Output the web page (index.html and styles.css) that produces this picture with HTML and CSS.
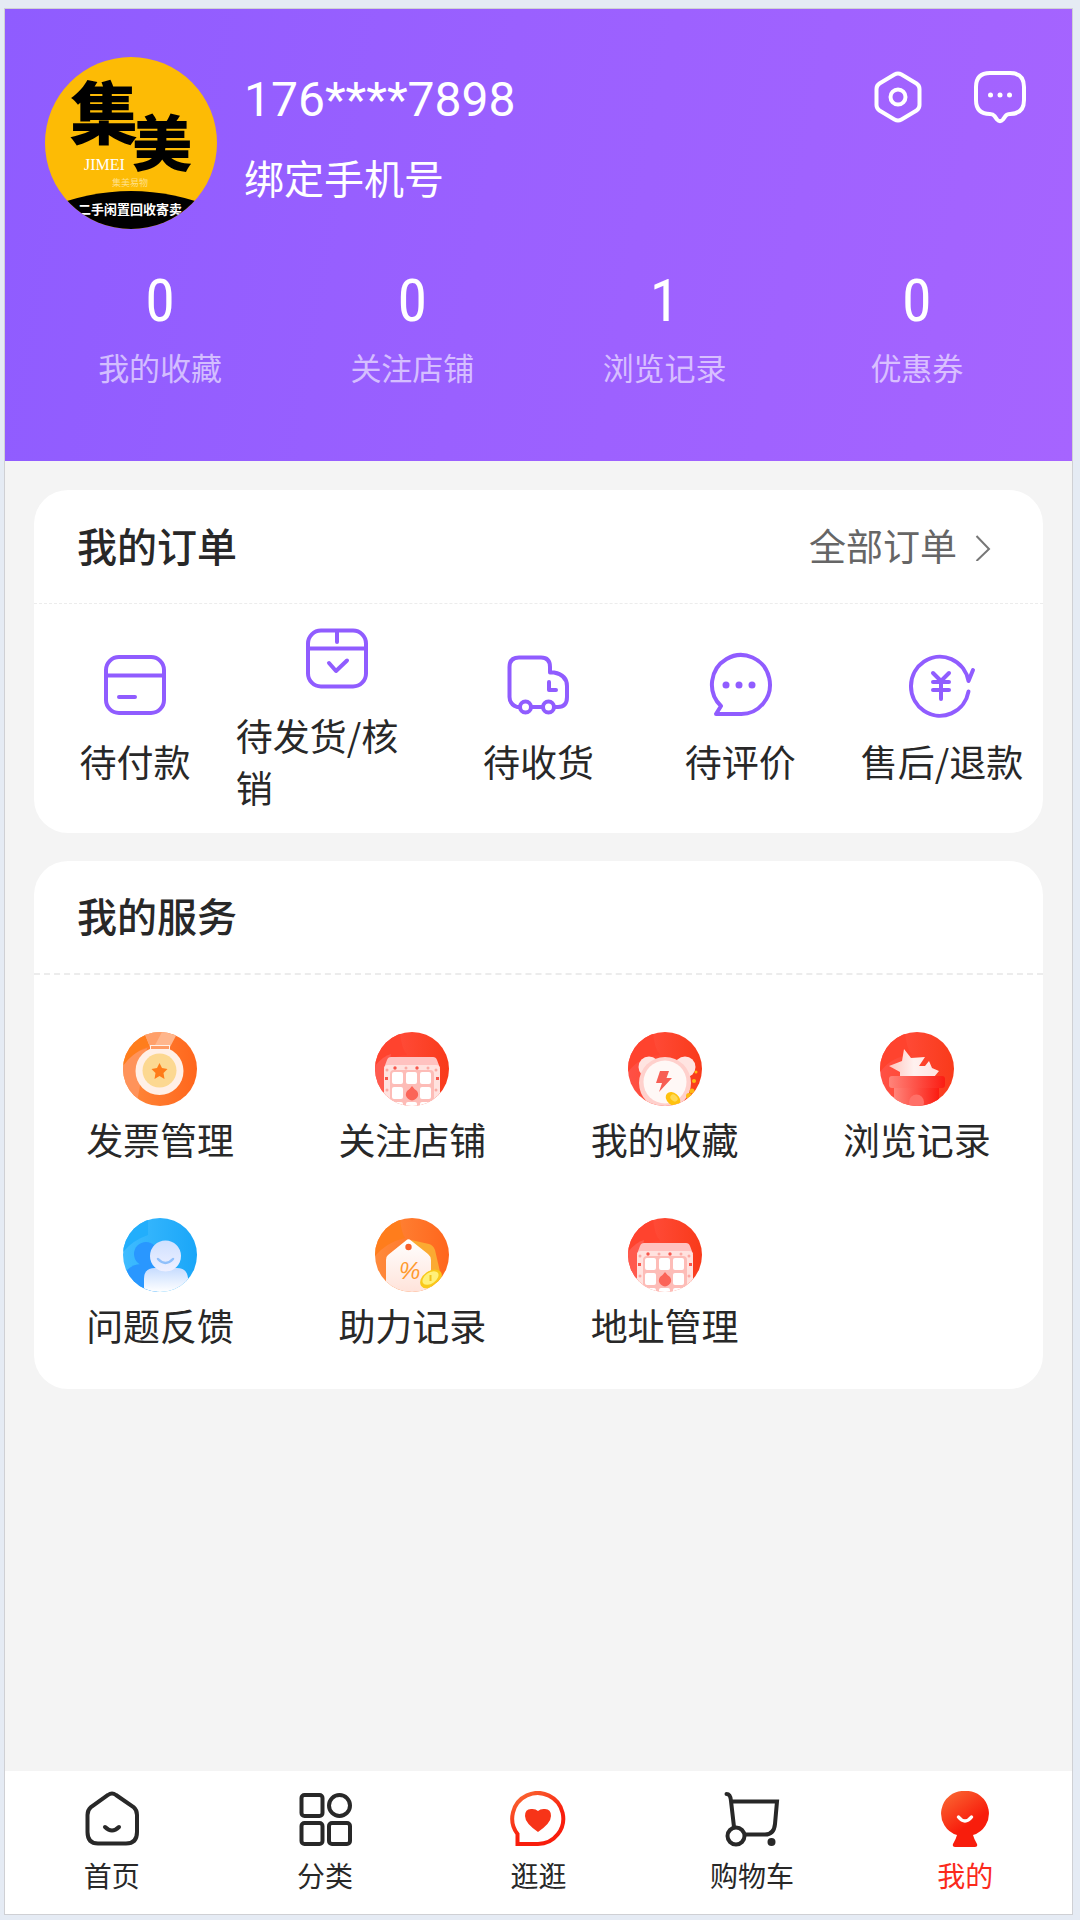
FILE: index.html
```html
<!DOCTYPE html>
<html lang="zh-CN">
<head>
    <meta charset="UTF-8">
    <meta name="viewport" content="width=device-width, initial-scale=1.0">
    <title>我的</title>
    <link rel="stylesheet" href="styles.css">
</head>
<body>
    <!-- shared gradients and icons -->
    <svg class="defs" aria-hidden="true">
        <defs>
            <linearGradient id="g-red" x1="0" y1="0" x2="1" y2="0">
                <stop offset="0" stop-color="#ff5046"/>
                <stop offset="0.35" stop-color="#ff4a36"/>
                <stop offset="1" stop-color="#f93a1a"/>
            </linearGradient>
            <linearGradient id="g-orange" x1="0" y1="0" x2="1" y2="0">
                <stop offset="0" stop-color="#ff8a3c"/>
                <stop offset="1" stop-color="#ff661c"/>
            </linearGradient>
            <linearGradient id="g-blue" x1="0" y1="0" x2="1" y2="0">
                <stop offset="0" stop-color="#3fbcff"/>
                <stop offset="1" stop-color="#1aa6f8"/>
            </linearGradient>
            <linearGradient id="g-pot" x1="0" y1="0" x2="1" y2="0">
                <stop offset="0" stop-color="#ff847a"/>
                <stop offset="1" stop-color="#fb1c12"/>
            </linearGradient>
            <linearGradient id="g-star" x1="0" y1="0" x2="1" y2="0">
                <stop offset="0" stop-color="#ffc5be"/>
                <stop offset="0.5" stop-color="#fff1ef"/>
                <stop offset="1" stop-color="#ffe3df"/>
            </linearGradient>
            <linearGradient id="g-body" x1="0" y1="0" x2="0" y2="1">
                <stop offset="0" stop-color="#c6dcff"/>
                <stop offset="1" stop-color="#ffffff"/>
            </linearGradient>
            <linearGradient id="g-face" x1="0" y1="0" x2="0" y2="1">
                <stop offset="0" stop-color="#cfe0ff"/>
                <stop offset="1" stop-color="#eff0ff"/>
            </linearGradient>
            <linearGradient id="g-tag" x1="0" y1="0" x2="0" y2="1">
                <stop offset="0" stop-color="#ffffff"/>
                <stop offset="1" stop-color="#ffe3da"/>
            </linearGradient>
            <linearGradient id="g-tab" x1="0" y1="0" x2="0.6" y2="1">
                <stop offset="0" stop-color="#fa6e36"/>
                <stop offset="0.7" stop-color="#f81d0c"/>
                <stop offset="1" stop-color="#f81d0c"/>
            </linearGradient>
            <clipPath id="c-round"><circle cx="37" cy="37" r="37"/></clipPath>
            <clipPath id="c-avatar"><circle cx="86" cy="86" r="86"/></clipPath>
        </defs>
        <symbol id="i-shop" viewBox="0 0 74 74">
            <g clip-path="url(#c-round)">
                <rect width="74" height="74" fill="url(#g-red)"/>
                <path d="M0 0H25Q26 16 32 23Q12 24 0 40Z" fill="#ff432e"/>
                <path d="M0 34Q8 24 16 22L9 60H0Z" fill="#ff5a4e"/>
                <path d="M16 25H58Q61 25 62 28L65 36H9L12 28Q13 25 16 25Z" fill="#ffc2c0"/>
                <rect x="9" y="33" width="56" height="45" rx="4" fill="#ffe2df"/>
                <rect x="15" y="38" width="44" height="40" rx="4" fill="#fdbcb7"/>
                <g fill="#fff">
                    <rect x="17" y="40" width="11" height="12" rx="2"/>
                    <rect x="31" y="40" width="11" height="12" rx="2"/>
                    <rect x="45" y="40" width="11" height="12" rx="2"/>
                    <rect x="17" y="55" width="11" height="12" rx="2"/>
                    <rect x="45" y="55" width="11" height="12" rx="2"/>
                    <rect x="17" y="70" width="11" height="8" rx="2"/>
                    <rect x="31" y="70" width="11" height="8" rx="2"/>
                    <rect x="45" y="70" width="11" height="8" rx="2"/>
                </g>
                <path d="M37 54Q39 57 42 59A6 6 0 1 1 32 59Q35 57 37 54Z" fill="#fb6458"/>
                <g fill="#f8564b">
                    <circle cx="20" cy="36" r="1.7"/>
                    <circle cx="42" cy="36" r="1.7"/>
                    <rect x="10" y="45" width="3" height="3"/>
                    <rect x="61" y="45" width="3" height="3"/>
                </g>
                <g fill="#fbaaa4">
                    <circle cx="31" cy="36" r="1.5"/>
                    <circle cx="53" cy="36" r="1.5"/>
                    <circle cx="12" cy="38" r="1.5"/>
                    <circle cx="61" cy="38" r="1.5"/>
                    <circle cx="12" cy="58" r="1.5"/>
                    <circle cx="61" cy="58" r="1.5"/>
                </g>
            </g>
        </symbol>
    </svg>

    <div class="app">
        <header class="header">
            <div class="profile">
                <svg class="avatar" viewBox="0 0 172 172" role="img" aria-label="头像">
                    <g clip-path="url(#c-avatar)">
                        <rect width="172" height="172" fill="#fdbb05"/>
                        <path d="M0 152Q86 116 172 152V172H0Z"/>
                        <text class="logo-big" x="25" y="82">集</text>
                        <text class="logo-mid" x="87" y="109">美</text>
                        <text class="logo-en" x="39" y="113">JIMEI</text>
                        <text class="logo-tiny" x="67" y="129">集美易物</text>
                        <text class="logo-sub" x="33" y="157">二手闲置回收寄卖</text>
                    </g>
                </svg>
                <div class="user">
                    <div class="phone">176****7898</div>
                    <a class="bind" href="#">绑定手机号</a>
                </div>
                <div class="actions">
                    <button class="icon-btn" type="button" aria-label="设置">
                        <svg viewBox="0 0 56 56">
                            <path d="M24.500 5.500Q28 3.500 31.500 5.500L46.500 14.500Q49.500 16.500 49.500 20V36Q49.500 39.500 46.500 41.500L31.500 50.500Q28 52.500 24.500 50.500L9.500 41.500Q6.500 39.500 6.500 36V20Q6.500 16.500 9.500 14.500Z"/>
                            <circle cx="28" cy="28" r="7.500"/>
                        </svg>
                    </button>
                    <button class="icon-btn" type="button" aria-label="消息">
                        <svg viewBox="0 0 56 56">
                            <path d="M18 4H38Q52 4 52 18V31Q52 45 38 45Q35 45 33.500 47L31 50.500Q28 54 25 50.500L22.500 47Q21 45 18 45Q4 45 4 31V18Q4 4 18 4Z"/>
                            <g class="dots">
                                <circle cx="18.500" cy="26" r="2.500"/>
                                <circle cx="28" cy="26" r="2.500"/>
                                <circle cx="37.500" cy="26" r="2.500"/>
                            </g>
                        </svg>
                    </button>
                </div>
            </div>
            <div class="stats">
                <a class="stat" href="#"><span class="num">0</span><span class="name">我的收藏</span></a>
                <a class="stat" href="#"><span class="num">0</span><span class="name">关注店铺</span></a>
                <a class="stat" href="#"><span class="num">1</span><span class="name">浏览记录</span></a>
                <a class="stat" href="#"><span class="num">0</span><span class="name">优惠券</span></a>
            </div>
        </header>

        <main class="main">
            <section class="card">
                <div class="card-head">
                    <h2>我的订单</h2>
                    <a class="more" href="#">全部订单
                        <svg viewBox="0 0 16 32"><path d="M1.500 7L14 20L1.500 32"/></svg>
                    </a>
                </div>
                <div class="orders">
                    <a class="order" href="#">
                        <svg viewBox="0 0 74 74">
                            <rect x="8" y="10" width="58" height="56" rx="13"/>
                            <path d="M8 28.500H66M21 50H37"/>
                        </svg>
                        <span>待付款</span>
                    </a>
                    <a class="order" href="#">
                        <svg viewBox="0 0 74 74">
                            <rect x="8" y="9.500" width="58" height="56" rx="13"/>
                            <path d="M8 27.500H66M37 10V21M29 42L36 50L47 39.500"/>
                        </svg>
                        <span class="wide">待发货/核<br>销</span>
                    </a>
                    <a class="order" href="#">
                        <svg viewBox="0 0 74 74">
                            <path d="M19 60H16Q8.500 57 8.500 50V20Q8.500 10.500 18 10.500H40Q49 10.500 49 20V25.500H53Q66 28 66 39V50Q66 60 57 60H53M30 60H42M48 35V43H55"/>
                            <circle cx="24.500" cy="60" r="5.500"/>
                            <circle cx="47.500" cy="60" r="5.500"/>
                        </svg>
                        <span>待收货</span>
                    </a>
                    <a class="order" href="#">
                        <svg viewBox="0 0 74 74">
                            <path d="M36 67H13L18 59A29 29.500 0 1 1 36 67Z"/>
                            <g class="dots">
                                <circle cx="23" cy="38" r="3.500"/>
                                <circle cx="36" cy="38" r="3.500"/>
                                <circle cx="49" cy="38" r="3.500"/>
                            </g>
                        </svg>
                        <span>待评价</span>
                    </a>
                    <a class="order" href="#">
                        <svg viewBox="0 0 74 74">
                            <path d="M68 23L63.500 34A29 29.500 0 1 0 63.500 44.500"/>
                            <path d="M28 26L36 34L44 26M28 35H44M28 43H44M36 35V52"/>
                        </svg>
                        <span>售后/退款</span>
                    </a>
                </div>
            </section>

            <section class="card">
                <div class="card-head strong">
                    <h2>我的服务</h2>
                </div>
                <div class="services">
                    <a class="service" href="#">
                        <svg viewBox="0 0 74 74">
                            <g clip-path="url(#c-round)">
                                <rect width="74" height="74" fill="url(#g-orange)"/>
                                <path d="M0 0H22L27 14Q12 18 0 34Z" fill="#ff7d1c"/>
                                <path d="M0 34Q10 20 24 16L14 70H0Z" fill="#ff935a"/>
                                <path d="M21 0H55L47 15H27Z" fill="#ffb68c"/>
                                <path d="M21 0H39L31 15H27Z" fill="#ffa06a"/>
                                <circle cx="36.500" cy="39" r="24" fill="#fff0e7"/>
                                <rect x="27.500" y="13.500" width="19" height="4" fill="#ff9d66" stroke="#fff0e7"/>
                                <circle cx="36.500" cy="38.500" r="17" fill="#fcd891"/>
                                <path d="M36.500 31L39 36L44.500 37L40.500 41L41.500 47L36.500 44L31.500 47L32.500 41L28.500 37L34 36Z" fill="#ff7b18"/>
                            </g>
                        </svg>
                        <span>发票管理</span>
                    </a>
                    <a class="service" href="#">
                        <svg viewBox="0 0 74 74"><use href="#i-shop"/></svg>
                        <span>关注店铺</span>
                    </a>
                    <a class="service" href="#">
                        <svg viewBox="0 0 74 74">
                            <g clip-path="url(#c-round)">
                                <rect width="74" height="74" fill="url(#g-red)"/>
                                <path d="M0 0H25Q26 16 32 23Q12 24 0 40Z" fill="#ff432e"/>
                                <circle cx="21" cy="35" r="10.500" fill="#ffe4e1"/>
                                <circle cx="57" cy="35" r="10.500" fill="#ffe4e1"/>
                                <circle cx="37" cy="51" r="26" fill="#ffd0cc"/>
                                <circle cx="37" cy="50" r="21.500" fill="#fff8f6"/>
                                <path d="M32 39H41L38.500 46H44L31 60L34 51H28Z" fill="#f75e54"/>
                                <ellipse cx="45" cy="67" rx="8" ry="6" transform="rotate(40 45 67)" fill="#ffc20e"/>
                                <ellipse cx="46" cy="66" rx="4" ry="3" transform="rotate(40 46 66)" fill="#ffda56"/>
                                <g fill="#fdb813">
                                    <circle cx="68" cy="40" r="1.500"/>
                                    <circle cx="66" cy="49" r="2"/>
                                    <circle cx="61" cy="64" r="3"/>
                                    <circle cx="64" cy="59" r="2.500"/>
                                </g>
                            </g>
                        </svg>
                        <span>我的收藏</span>
                    </a>
                    <a class="service" href="#">
                        <svg viewBox="0 0 74 74">
                            <g clip-path="url(#c-round)">
                                <rect width="74" height="74" fill="url(#g-red)"/>
                                <path d="M0 0H25Q26 16 32 23Q12 24 0 40Z" fill="#ff432e"/>
                                <path d="M24 17L31 26L45 25L39 34L45 34L49 29L52 36L59 39L54 45H20V40L9 34L22 29Z" fill="url(#g-star)"/>
                                <rect x="14" y="55" width="45" height="20" fill="url(#g-pot)"/>
                                <rect x="9" y="44" width="56" height="12" rx="3" fill="url(#g-pot)"/>
                                <circle cx="36.500" cy="70" r="7.500" fill="#ff7068"/>
                            </g>
                        </svg>
                        <span>浏览记录</span>
                    </a>
                    <a class="service" href="#">
                        <svg viewBox="0 0 74 74">
                            <g clip-path="url(#c-round)">
                                <rect width="74" height="74" fill="url(#g-blue)"/>
                                <path d="M0 0H25V17Q10 22 0 34Z" fill="#22aefc"/>
                                <circle cx="23" cy="36" r="12" fill="#2997ff"/>
                                <path d="M4 52Q10 46 18 46H34V74H4Z" fill="#2997ff"/>
                                <path d="M21 74V61Q21 50 32 50H54Q64 50 65 60V74Z" fill="url(#g-body)"/>
                                <circle cx="42.500" cy="38" r="15.500" fill="url(#g-face)"/>
                                <path d="M35 41Q42.500 49 50 41" fill="none" stroke="#90c0fb" stroke-width="2.500" stroke-linecap="round"/>
                            </g>
                        </svg>
                        <span>问题反馈</span>
                    </a>
                    <a class="service" href="#">
                        <svg viewBox="0 0 74 74">
                            <g clip-path="url(#c-round)">
                                <rect width="74" height="74" fill="url(#g-orange)"/>
                                <path d="M0 0H25Q26 14 30 20Q12 24 0 38Z" fill="#ff7d1c"/>
                                <path d="M36 22L54 26Q58 27 60 32L66 58L55 64Z" fill="#fbaa32"/>
                                <path d="M31 22.500Q33.500 20 36 22.500L53 36Q56 38.500 56 42V74H11V42Q11 38.500 13 37Z" fill="url(#g-tag)"/>
                                <circle cx="33.500" cy="29" r="3.200" fill="#f8602a"/>
                                <text class="percent" x="24" y="61">%</text>
                                <ellipse cx="56" cy="61" rx="12" ry="8" transform="rotate(-35 56 61)" fill="#f9c91a"/>
                                <ellipse cx="55.500" cy="60" rx="9" ry="5.500" transform="rotate(-35 55.500 60)" fill="#fff07a"/>
                                <path d="M55.500 57V63" stroke="#f3c41c" stroke-width="2"/>
                            </g>
                        </svg>
                        <span>助力记录</span>
                    </a>
                    <a class="service" href="#">
                        <svg viewBox="0 0 74 74"><use href="#i-shop"/></svg>
                        <span>地址管理</span>
                    </a>
                </div>
            </section>
        </main>

        <nav class="tabbar">
            <a class="tab" href="#">
                <svg viewBox="0 0 56 56">
                    <path d="M24 4Q28 1 32 4L49.500 16Q53 19 53 24V41Q53 52.500 42 52.500H14Q3.500 52.500 3.500 41V24Q3.500 19 7 16Z"/>
                    <path d="M21 36Q28 43 35 36"/>
                </svg>
                <span>首页</span>
            </a>
            <a class="tab" href="#">
                <svg viewBox="0 0 56 56">
                    <rect x="4.500" y="4" width="21" height="21" rx="3"/>
                    <circle cx="42.500" cy="14.500" r="10.500"/>
                    <rect x="4.500" y="32" width="21" height="21" rx="3"/>
                    <rect x="32" y="32" width="21" height="21" rx="3"/>
                </svg>
                <span>分类</span>
            </a>
            <a class="tab" href="#">
                <svg class="colored" viewBox="0 0 56 56">
                    <path d="M7.500 53V43A25.500 25.500 0 1 1 28 53Z" fill="none" stroke="url(#g-tab)" stroke-width="4"/>
                    <path d="M28 41Q15 32 15 25Q15 18 21 18Q25.500 17.500 28 20Q30.500 17.500 35 18Q41 18 41 25Q41 32 28 41Z" fill="#f73418"/>
                </svg>
                <span>逛逛</span>
            </a>
            <a class="tab" href="#">
                <svg viewBox="0 0 56 56">
                    <path d="M2.500 3Q6.500 3 7 10L10 36M7 10.500H53L51 33Q50 43.500 41 43.500H21"/>
                    <circle cx="12" cy="45" r="8.500"/>
                    <circle class="wheel" cx="47.500" cy="51" r="4"/>
                </svg>
                <span>购物车</span>
            </a>
            <a class="tab active" href="#">
                <svg class="colored" viewBox="0 0 56 56">
                    <path d="M28 0A22.300 22.500 0 0 1 36 44Q37 48 40 53Q41 56 38 56H18Q15 56 16 53Q19 48 20 44A22.300 22.500 0 0 1 28 0Z" fill="url(#g-tab)"/>
                    <path d="M21.500 26Q28 34 34.500 26" fill="none" stroke="#fff" stroke-width="3.500" stroke-linecap="round"/>
                </svg>
                <span>我的</span>
            </a>
        </nav>
    </div>
</body>
</html>
```
FILE: styles.css
```css
* {
    box-sizing: border-box;
}
body {
    margin: 0;
    padding: 8px 7px 5px 4px;
    min-height: 100vh;
    display: flex;
    background-color: #e5ebf4;
    font-family: "Noto Sans CJK SC", sans-serif;
    color: #282828;
}
a {
    color: inherit;
    text-decoration: none;
}
.defs {
    position: absolute;
    width: 0;
    height: 0;
}
.app {
    flex: 1;
    display: flex;
    flex-direction: column;
    border: 1px solid #cfd0d4;
    background-color: #f4f4f4;
}

/* header */
.header {
    padding: 48px 0 72px;
    background: linear-gradient(100deg, #8f5cff 0%, #9a60ff 45%, #a664ff 100%);
    color: #fff;
}
.profile {
    display: flex;
    align-items: flex-start;
    padding: 0 44px 0 40px;
}
.avatar {
    width: 172px;
    height: 172px;
}
.logo-big,
.logo-mid,
.logo-sub,
.logo-tiny {
    font-weight: 900;
}
.logo-big {
    font-size: 68px;
}
.logo-mid {
    font-size: 60px;
}
.logo-en {
    font-family: "Liberation Serif", serif;
    font-size: 16px;
    fill: #fff;
}
.logo-tiny {
    font-size: 9px;
    font-weight: 400;
    fill: #ffe08a;
}
.logo-sub {
    font-size: 13px;
    font-weight: 700;
    fill: #fff;
}
.user {
    flex: 1;
    display: flex;
    flex-direction: column;
    align-items: flex-start;
    gap: 20px;
    padding: 14px 0 0 27px;
}
.phone {
    font-family: Roboto, sans-serif;
    font-size: 48px;
    line-height: 58px;
}
.bind {
    font-size: 40px;
    line-height: 56px;
}
.actions {
    display: flex;
    gap: 46px;
    padding-top: 12px;
}
.icon-btn {
    width: 56px;
    height: 56px;
    padding: 0;
    border: none;
    background: none;
    cursor: pointer;
}
.icon-btn svg {
    display: block;
    width: 56px;
    height: 56px;
    fill: none;
    stroke: #fff;
    stroke-width: 4;
}
.icon-btn .dots {
    fill: #fff;
    stroke: none;
}
.stats {
    display: grid;
    grid-template-columns: repeat(4, 1fr);
    padding: 42px 29px 0;
}
.stat {
    display: flex;
    flex-direction: column;
    align-items: center;
    gap: 14px;
}
.num {
    font-family: "Roboto Condensed", Roboto, sans-serif;
    font-size: 60px;
    line-height: 60px;
}
.name {
    font-size: 31px;
    line-height: 44px;
    color: rgba(255, 255, 255, 0.6);
}

/* cards */
.main {
    flex: 1;
    display: flex;
    flex-direction: column;
    gap: 28px;
    padding: 29px;
}
.card {
    background-color: #fff;
    border-radius: 34px;
}
.card-head {
    display: flex;
    align-items: center;
    justify-content: space-between;
    height: 114px;
    padding: 0 52px 4px 43px;
    border-bottom: 1px dashed #ececec;
}
.card-head.strong {
    border-bottom: 2px dashed #ececec;
}
h2 {
    margin: 0;
    font-size: 40px;
    font-weight: 500;
    line-height: 56px;
}
.more {
    display: flex;
    align-items: center;
    gap: 18px;
    font-size: 37px;
    line-height: 52px;
    color: #666;
}
.more svg {
    width: 16px;
    height: 32px;
    fill: none;
    stroke: #777;
    stroke-width: 2;
}
.orders {
    display: grid;
    grid-template-columns: repeat(5, 1fr);
    align-items: center;
    padding: 17px 0 20px;
}
.order,
.service {
    display: flex;
    flex-direction: column;
    align-items: center;
    font-size: 37px;
    line-height: 52px;
}
.order {
    gap: 14px;
}
.order svg {
    width: 74px;
    height: 74px;
    fill: none;
    stroke: #905cff;
    stroke-width: 4;
    stroke-linecap: round;
    stroke-linejoin: round;
}
.order .dots {
    fill: #905cff;
    stroke: none;
}
.order .wide {
    width: 100%;
}
.services {
    display: grid;
    grid-template-columns: repeat(4, 1fr);
    row-gap: 53px;
    padding: 57px 0 38px;
}
.service {
    gap: 7px;
}
.service svg {
    width: 74px;
    height: 74px;
}
.percent {
    font-family: "Liberation Sans", sans-serif;
    font-size: 24px;
    font-style: italic;
    fill: #ff9a2e;
}

/* bottom tabs */
.tabbar {
    display: grid;
    grid-template-columns: repeat(5, 1fr);
    padding: 20px 0 19px;
    background-color: #fff;
}
.tab {
    display: flex;
    flex-direction: column;
    align-items: center;
    gap: 8px;
    font-size: 28px;
    line-height: 40px;
}
.tab svg {
    width: 56px;
    height: 56px;
    fill: none;
    stroke: #282828;
    stroke-width: 4;
    stroke-linecap: round;
}
.tab .colored {
    stroke: none;
}
.tab .wheel {
    fill: #282828;
    stroke: none;
}
.tab.active {
    color: #fb2a1c;
}
```
